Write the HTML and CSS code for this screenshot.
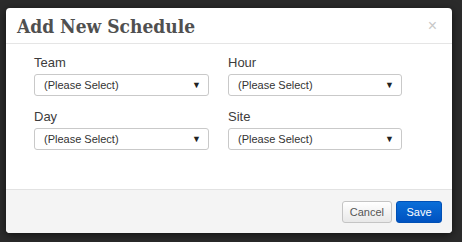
FILE: index.html
```html
<!DOCTYPE html>
<html lang="en">
<head>
  <meta charset="UTF-8">
  <title>Add New Schedule</title>
  <link rel="stylesheet" href="styles.css">
</head>
<body>

<div class="modal">
  <div class="modal-header">
    <h2>Add New Schedule</h2>
    <span class="close">&times;</span>
  </div>

  <div class="modal-body">
    <div class="field">
      <label>Team</label>
      <div class="select"><span>(Please Select)</span><span class="arrow">&#9660;</span></div>
    </div>
    <div class="field">
      <label>Hour</label>
      <div class="select"><span>(Please Select)</span><span class="arrow">&#9660;</span></div>
    </div>
    <div class="field">
      <label>Day</label>
      <div class="select"><span>(Please Select)</span><span class="arrow">&#9660;</span></div>
    </div>
    <div class="field">
      <label>Site</label>
      <div class="select"><span>(Please Select)</span><span class="arrow">&#9660;</span></div>
    </div>
  </div>

  <div class="modal-footer">
    <button class="btn">Cancel</button>
    <button class="btn btn-primary">Save</button>
  </div>
</div>

</body>
</html>
```

FILE: styles.css
```css
body {
  font-family: 'Liberation Sans', Arial, sans-serif;
  background-color: #2b2b2b;
  margin: 0;
  padding: 8px 0 0 6px;
  height: 242px;
  box-sizing: border-box;
  overflow: hidden;
}

.modal {
  width: 446px;
  height: 225px;
  background-color: #fff;
  border-radius: 4px;
  box-shadow: 0 2px 8px rgba(0,0,0,0.6);
  display: flex;
  flex-direction: column;
  overflow: hidden;
}

.modal-header {
  height: 35px;
  border-bottom: 1px solid #e5e5e5;
  display: flex;
  align-items: center;
  justify-content: space-between;
  padding: 0 15px 0 11px;
}

.modal-header h2 {
  margin: 0;
  font-family: 'DejaVu Serif Condensed', 'DejaVu Serif', serif;
  font-stretch: condensed;
  font-weight: bold;
  font-size: 19px;
  color: #505050;
}

.close {
  color: #c8c8c8;
  font-size: 16px;
  line-height: 1;
}

.modal-body {
  flex: 1;
  display: grid;
  grid-template-columns: 175px 174px;
  column-gap: 19px;
  align-content: start;
  padding: 11px 28px 0;
}

.field {
  margin-bottom: 13px;
}

.field label {
  display: block;
  font-size: 13px;
  line-height: 16px;
  color: #3c3c3c;
  margin-bottom: 3px;
}

.select {
  height: 22px;
  box-sizing: border-box;
  border: 1px solid #c9c9c9;
  border-radius: 3px;
  background-color: #fff;
  display: flex;
  align-items: center;
  justify-content: space-between;
  padding: 0 7px 0 9px;
  font-size: 11px;
  color: #333;
}

.arrow {
  font-size: 9px;
  color: #222;
}

.modal-footer {
  height: 44px;
  border-top: 1px solid #e2e2e2;
  background-color: #f4f4f4;
  display: flex;
  justify-content: flex-end;
  align-items: flex-start;
  gap: 4px;
  padding: 11px 10px 0 0;
  box-sizing: border-box;
}

.btn {
  height: 22px;
  padding: 0 7px;
  font-family: 'Liberation Sans', Arial, sans-serif;
  font-size: 11px;
  color: #555;
  background: linear-gradient(#ffffff, #e8e8e8);
  border: 1px solid #c4c4c4;
  border-radius: 3px;
  cursor: pointer;
}

.btn-primary {
  width: 46px;
  color: #fff;
  background: linear-gradient(#0a6ed8, #0052c0);
  border-color: #0050b5;
}
```
